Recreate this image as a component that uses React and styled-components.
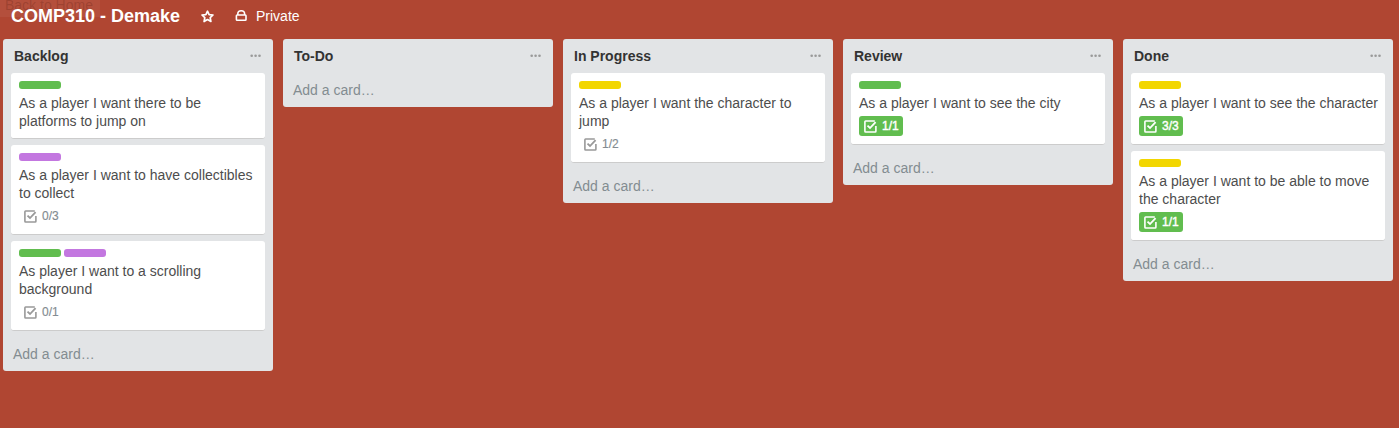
import React from 'react';
import styled, { createGlobalStyle } from 'styled-components';

const GlobalStyle = createGlobalStyle`
  * { box-sizing: border-box; }
  body {
    margin: 0;
    background: #b04632;
    font-family: "Liberation Sans", Arial, sans-serif;
    font-size: 14px;
    line-height: 18px;
    color: #4d4d4d;
  }
`;

const Page = styled.div`
  position: relative;
  height: 428px;
  overflow: hidden;
`;

const FadingTooltip = styled.div`
  position: absolute;
  top: 0;
  left: 0;
  width: 100px;
  height: 17px;
  padding-left: 5px;
  background: rgba(255, 255, 255, 0.05);
  color: rgba(77, 20, 10, 0.22);
  font-size: 14px;
  line-height: 10px;
  white-space: nowrap;
`;

const BoardHeader = styled.header`
  position: relative;
  display: flex;
  align-items: center;
  height: 39px;
  padding: 0 0 7px 11px;
  color: #fff;
`;

const BoardTitle = styled.h1`
  margin: 0;
  width: 190px;
  font-size: 18px;
  line-height: 32px;
  font-weight: 700;
  white-space: nowrap;
`;

const HeaderIcon = styled.svg`
  display: block;
  flex: none;
  margin-right: ${(p) => p.$gap}px;
`;

const Visibility = styled.span`
  font-size: 14px;
  line-height: 32px;
`;

const Lists = styled.main`
  display: flex;
  align-items: flex-start;
  gap: 10px;
  padding-left: 3px;
`;

const List = styled.section`
  flex: none;
  width: 270px;
  padding: 0 8px;
  border-radius: 3px;
  background: #e2e4e6;
`;

const ListHeader = styled.div`
  display: flex;
  justify-content: space-between;
  height: 34px;
  padding: 8px 4px 0 3px;
`;

const ListTitle = styled.h2`
  margin: 0;
  font-size: 14px;
  line-height: 18px;
  font-weight: 700;
  color: #333;
`;

const Dots = styled.svg`
  display: block;
  margin-top: 7px;
`;

const Card = styled.article`
  margin-bottom: 6px;
  padding: 8px 6px 8px 8px;
  border-bottom: 1px solid #ccc;
  border-radius: 3px;
  background: #fff;
`;

const Labels = styled.div`
  display: flex;
  gap: 3px;
  margin-bottom: 5px;
`;

const labelColors = { green: '#61bd4f', purple: '#c377e0', yellow: '#f2d600' };

const Label = styled.span`
  width: 42px;
  height: 8px;
  border-radius: 3px;
  background: ${(p) => labelColors[p.$color]};
`;

const CardText = styled.p`
  margin: 0;
`;

const Badge = styled.div`
  display: flex;
  align-items: center;
  width: 44px;
  height: 20px;
  margin-top: 4px;
  padding-left: 5px;
  gap: 5px;
  border-radius: 3px;
  font-size: 12px;
  line-height: 20px;
  color: ${(p) => (p.$done ? '#fff' : '#999')};
  background: ${(p) => (p.$done ? '#61bd4f' : 'transparent')};
`;

const BadgeCount = styled.span`
  color: ${(p) => (p.$done ? '#fff' : '#838c91')};
  -webkit-text-stroke: ${(p) => (p.$done ? '0.4px' : '0.15px')};
`;

const AddCard = styled.div`
  height: 34px;
  padding: 8px 2px;
  color: #838c91;
`;

const lists = [
  {
    title: 'Backlog',
    cards: [
      { labels: ['green'], text: ['As a player I want there to be', 'platforms to jump on'] },
      { labels: ['purple'], text: ['As a player I want to have collectibles', 'to collect'], count: '0/3' },
      { labels: ['green', 'purple'], text: ['As player I want to a scrolling', 'background'], count: '0/1' },
    ],
  },
  { title: 'To-Do', cards: [] },
  {
    title: 'In Progress',
    cards: [{ labels: ['yellow'], text: ['As a player I want the character to', 'jump'], count: '1/2' }],
  },
  {
    title: 'Review',
    cards: [{ labels: ['green'], text: ['As a player I want to see the city'], count: '1/1', done: true }],
  },
  {
    title: 'Done',
    cards: [
      { labels: ['yellow'], text: ['As a player I want to see the character'], count: '3/3', done: true },
      { labels: ['yellow'], text: ['As a player I want to be able to move', 'the character'], count: '1/1', done: true },
    ],
  },
];

function CheckIcon() {
  return (
    <svg width="13" height="13" viewBox="0 0 13 13" fill="none" stroke="currentColor" strokeWidth="1.6">
      <path d="M10.8 1H1.6Q0.9 1 0.9 1.7V11.3Q0.9 12 1.6 12H11.2Q11.9 12 11.9 11.3V6" />
      <path d="M3.5 5.6L6 8L11.6 2.1" strokeWidth="1.8" />
    </svg>
  );
}

function CardItem({ card }) {
  return (
    <Card>
      <Labels>
        {card.labels.map((c) => (
          <Label key={c} $color={c} />
        ))}
      </Labels>
      <CardText>
        {card.text.map((line, i) => (
          <React.Fragment key={line}>
            {i > 0 && <br />}
            {line}
          </React.Fragment>
        ))}
      </CardText>
      {card.count && (
        <Badge $done={card.done}>
          <CheckIcon />
          <BadgeCount $done={card.done}>{card.count}</BadgeCount>
        </Badge>
      )}
    </Card>
  );
}

export default function App() {
  return (
    <Page>
      <GlobalStyle />
      <FadingTooltip>Back to Home</FadingTooltip>
      <BoardHeader>
        <BoardTitle>COMP310 - Demake</BoardTitle>
        <HeaderIcon $gap={21} width="13" height="13" viewBox="0 0 13 13" fill="none" stroke="#fff" strokeWidth="1.7" strokeLinejoin="round">
          <path d="M6.5 1.2L8.1 4.6L12 5L9.2 7.6L9.9 11.5L6.5 9.6L3.1 11.5L3.8 7.6L1 5L4.9 4.6Z" />
        </HeaderIcon>
        <HeaderIcon $gap={9} width="12" height="12" viewBox="0 0 12 12" fill="none" stroke="#fff" strokeWidth="1.6">
          <rect x="1.4" y="5" width="9.6" height="5.3" rx="0.8" />
          <path d="M2.8 5V4C2.8 2 4.2 0.8 6.2 0.8S9.6 2 9.6 4V5" />
        </HeaderIcon>
        <Visibility>Private</Visibility>
      </BoardHeader>
      <Lists>
        {lists.map((list) => (
          <List key={list.title}>
            <ListHeader>
              <ListTitle>{list.title}</ListTitle>
              <Dots width="11" height="4" viewBox="0 0 11 4" fill="#999">
                <circle cx="1.7" cy="1.8" r="1.3" />
                <circle cx="5.6" cy="1.8" r="1.3" />
                <circle cx="9.5" cy="1.8" r="1.3" />
              </Dots>
            </ListHeader>
            {list.cards.map((card) => (
              <CardItem key={card.text[0]} card={card} />
            ))}
            <AddCard>Add a card…</AddCard>
          </List>
        ))}
      </Lists>
    </Page>
  );
}
